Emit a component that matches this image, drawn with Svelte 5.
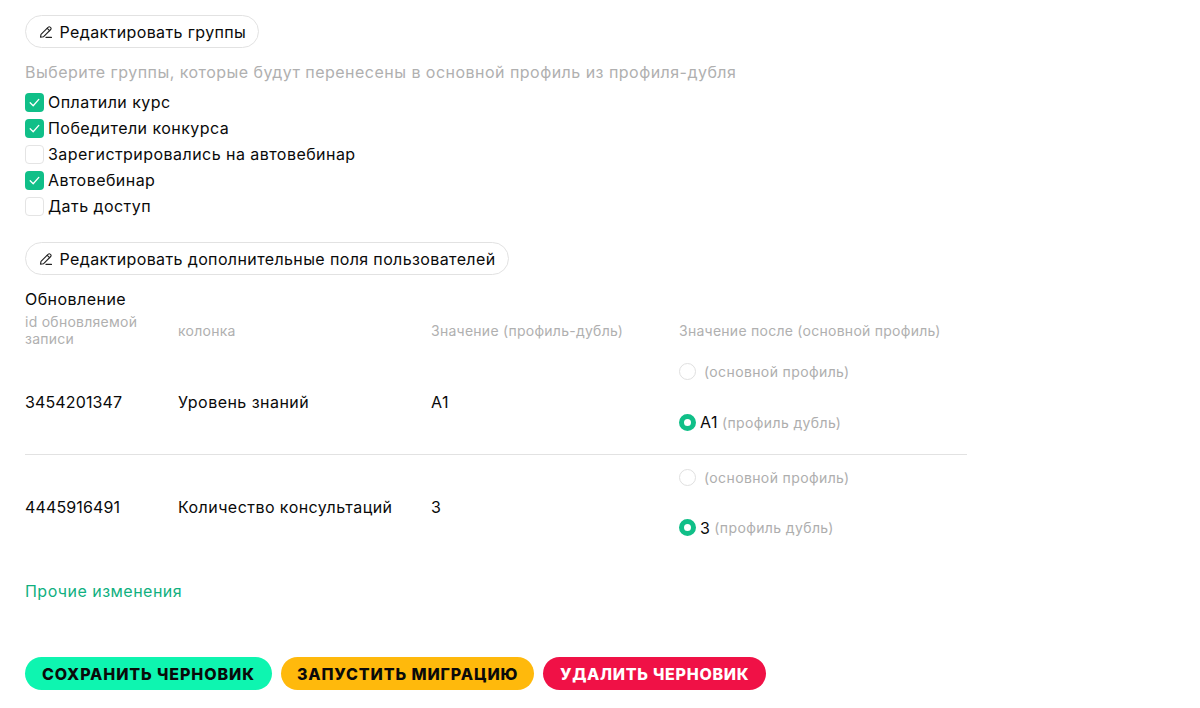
<script>
  const groups = [
    { name: 'Оплатили курс', on: true },
    { name: 'Победители конкурса', on: true },
    { name: 'Зарегистрировались на автовебинар', on: false },
    { name: 'Автовебинар', on: true },
    { name: 'Дать доступ', on: false }
  ];
  const rows = [
    { id: '3454201347', col: 'Уровень знаний', val: 'А1' },
    { id: '4445916491', col: 'Количество консультаций', val: '3' }
  ];
</script>

{#snippet pencil()}
  <svg class="pencil" viewBox="0 0 14 14" width="14" height="14" fill="none" stroke="#222" stroke-width="1.1" stroke-linejoin="round" stroke-linecap="round">
    <path d="M2 9.4 9.3 2.1a1.3 1.3 0 0 1 1.9 0l.5.5a1.3 1.3 0 0 1 0 1.9L4.4 11.8l-2.9.4z" />
    <path d="M8.2 3.3l2.4 2.4M7 12.4h5.5" />
  </svg>
{/snippet}

<main class="page">
  <button class="outline">{@render pencil()}<span class="label">Редактировать группы</span></button>
  <p class="hint">Выберите группы, которые будут перенесены в основной профиль из профиля-дубля</p>
  <ul class="groups">
    {#each groups as g}
      <li>
        <span class="box" class:on={g.on}>
          {#if g.on}
            <svg viewBox="0 0 19 19" width="19" height="19" fill="none" stroke="#fff" stroke-width="1.3" stroke-linecap="round" stroke-linejoin="round"><path d="M5.2 9.8l3 3 5.6-6.4" /></svg>
          {/if}
        </span>
        {g.name}
      </li>
    {/each}
  </ul>
  <button class="outline second">{@render pencil()}<span class="label">Редактировать дополнительные поля пользователей</span></button>
  <h3>Обновление</h3>
  <div class="table">
    <div class="row head">
      <div>id обновляемой записи</div>
      <div>колонка</div>
      <div>Значение (профиль-дубль)</div>
      <div>Значение после (основной профиль)</div>
    </div>
    {#each rows as r, i}
      <div class="row body" class:ruled={i === 0}>
        <div class="num">{r.id}</div>
        <div>{r.col}</div>
        <div>{r.val}</div>
        <div class="options">
          <div class="opt"><span class="radio"></span><span class="muted first">(основной профиль)</span></div>
          <div class="opt"><span class="radio on"></span><span class="val">{r.val}</span><span class="muted">(профиль дубль)</span></div>
        </div>
      </div>
    {/each}
  </div>
  <a class="other" href="#other">Прочие изменения</a>
  <div class="actions">
    <button class="act save">СОХРАНИТЬ ЧЕРНОВИК</button>
    <button class="act run">ЗАПУСТИТЬ МИГРАЦИЮ</button>
    <button class="act del">УДАЛИТЬ ЧЕРНОВИК</button>
  </div>
</main>

<style>
  :global(body) { margin: 0; background: #fff; }
  .page {
    padding: 15px 0 0 25px;
    font-family: "Inter", sans-serif;
    font-size: 16px;
    letter-spacing: .45px;
    color: #0a0a0a;
    display: flex;
    flex-direction: column;
    align-items: flex-start;
  }
  button { font-family: inherit; cursor: pointer; }
  .outline {
    height: 33px;
    padding: 0 12px 0 13px;
    display: flex;
    align-items: center;
    gap: 6.5px;
    background: #fff;
    border: 1px solid #e2e2e2;
    border-radius: 17px;
    font-size: 16px;
    letter-spacing: .38px;
    color: #0a0a0a;
  }
  .label { position: relative; top: .5px; }
  .hint { margin: 13px 0 0; height: 22px; line-height: 22px; color: #b0b0b0; font-size: 16px; letter-spacing: .47px; }
  .groups { list-style: none; margin: 6px 0 0; padding: 0; }
  .groups li { height: 26px; display: flex; align-items: center; gap: 4px; }
  .box {
    width: 19px; height: 19px; box-sizing: border-box; border: 1px solid #e4e4e4; border-radius: 4px;
    display: block; background: #fff;
  }
  .box.on { background: #10bf88; border: 0; }
  .box svg { display: block; }
  .second { margin-top: 23px; padding-right: 13px; }
  h3 { margin: 14px 0 0; font-weight: 400; font-size: 16px; line-height: 20px; }
  .table { width: 942px; margin-top: 2.5px; }
  .row { display: grid; grid-template-columns: 153px 253px 248px 289px; }
  .head { font-size: 14px; letter-spacing: .26px; color: #b0b0b0; line-height: 17px; align-items: center; height: 37.5px; }
  .head > div:first-child { width: 125px; }
  .body { align-items: center; height: 104px; }
  .body.ruled { border-bottom: 1px solid #e2e2e2; height: 105px; }
  .num { letter-spacing: .13px; }
  .options { display: flex; flex-direction: column; margin-top: -9px; }
  .opt { height: 50.5px; display: flex; align-items: center; font-size: 16px; }
  .radio {
    width: 17px; height: 17px; box-sizing: border-box; border-radius: 50%; border: 1px solid #e0e0e0;
    background: #fff; margin-right: 4px; flex: none;
  }
  .radio.on { border: 5.5px solid #10bf88; }
  .muted { color: #aeaeae; font-size: 14px; letter-spacing: .38px; }
  .muted.first { margin-left: 4px; }
  .val { margin-right: 4px; }
  .other { margin-top: 21px; line-height: 22px; color: #10b080; text-decoration: none; letter-spacing: .47px; }
  .actions { display: flex; gap: 8.5px; margin-top: 55px; }
  .act {
    height: 33px; border: 0; border-radius: 17px; padding: 0 17px;
    font-family: "Inter", sans-serif; font-weight: 800; font-size: 16px; letter-spacing: .9px; color: #0a0a0a;
  }
  .save { background: #0ef5b0; padding-right: 17.5px; }
  .run { background: #ffb90c; padding: 0 16px; }
  .del { background: #f01146; color: #fff; letter-spacing: .72px; }
</style>
